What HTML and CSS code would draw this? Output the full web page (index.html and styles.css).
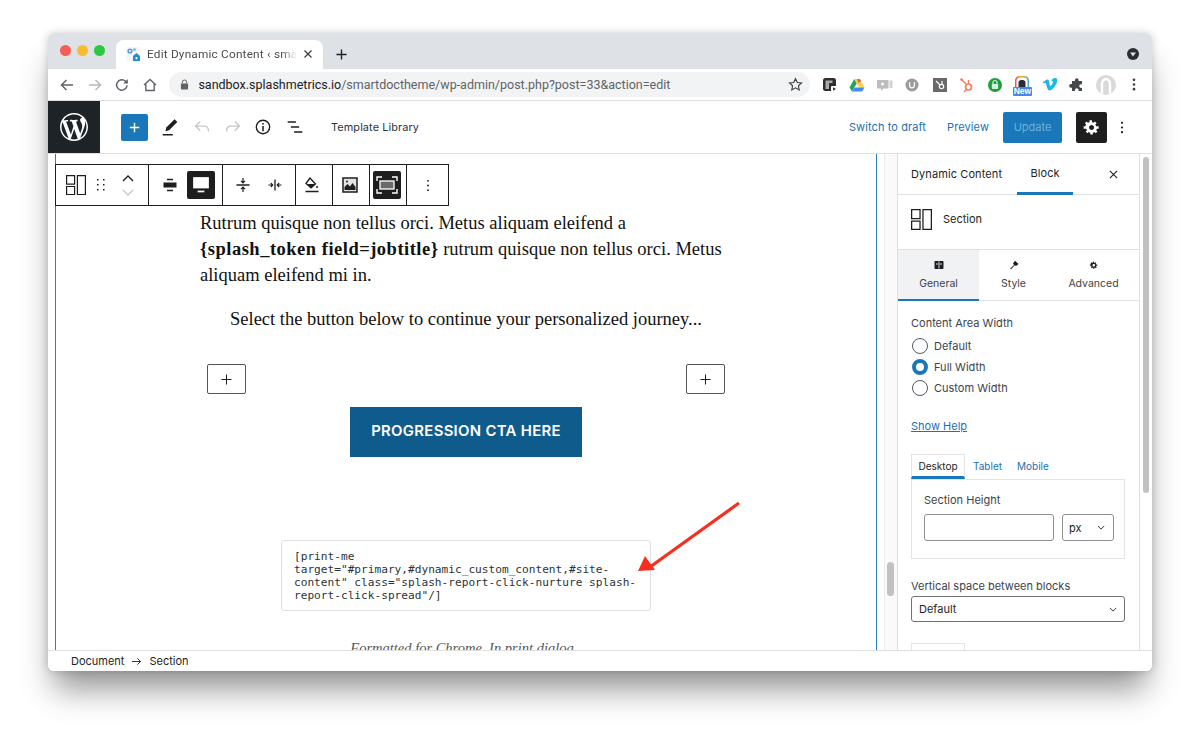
FILE: index.html
```html
<!DOCTYPE html>
<html lang="en">
<head>
<meta charset="utf-8">
<title>Edit Dynamic Content</title>
<link rel="stylesheet" href="styles.css">
</head>
<body>
<div class="window">
  <div class="tabbar">
    <div class="lights"><span class="light red"></span><span class="light amber"></span><span class="light green"></span></div>
    <div class="tab">
      <svg class="favicon" viewBox="0 0 14 14"><rect width="14" height="14" fill="#f4f7fa"/><circle cx="4" cy="4" r="2.6" fill="#5d9ad6"/><circle cx="4" cy="4" r="1" fill="#fff"/><path d="M7 9l3.5-3L14 9v5H7z" fill="#1a8fd8"/><rect x="9.6" y="10" width="1.8" height="2.2" fill="#fff"/><circle cx="8.5" cy="2.5" r="1.5" fill="#8fb8de"/></svg>
      <span class="tab-title">Edit Dynamic Content ‹ smartdoctheme</span>
      <svg class="tab-close" viewBox="0 0 10 10"><path d="M1.5 1.5l7 7M8.5 1.5l-7 7" stroke="#3c4043" stroke-width="1.3" fill="none"/></svg>
    </div>
    <svg class="new-tab" viewBox="0 0 12 12"><path d="M6 .5v11M.5 6h11" stroke="#202124" stroke-width="1.5" fill="none"/></svg>
    <span class="spacer"></span>
    <svg class="profile-menu" viewBox="0 0 12 12"><circle cx="6" cy="6" r="6" fill="#2b2d30"/><path d="M3 4.5h6L6 8.5z" fill="#dee1e6"/></svg>
  </div>

  <div class="navbar">
    <svg class="nav-icon" viewBox="0 0 16 16"><path d="M14 8H2.5M7.5 3L2.5 8l5 5" stroke="#5f6368" stroke-width="1.5" fill="none"/></svg>
    <svg class="nav-icon faded" viewBox="0 0 16 16"><path d="M2 8h11.5M8.5 3l5 5-5 5" stroke="#b5b8bc" stroke-width="1.5" fill="none"/></svg>
    <svg class="nav-icon" viewBox="0 0 16 16"><path d="M13 8.2A5.2 5.2 0 1 1 11.5 4.3L13.3 6" stroke="#5f6368" stroke-width="1.5" fill="none"/><path d="M13.8 2v4.6H9.2z" fill="#5f6368"/></svg>
    <svg class="nav-icon" viewBox="0 0 16 16"><path d="M2 8l6-5.5L14 8M3.8 7v6.5h8.4V7" stroke="#5f6368" stroke-width="1.4" fill="none"/></svg>
    <div class="omnibox">
      <svg class="lock" viewBox="0 0 10 12"><path d="M2.6 5V3.4a2.4 2.4 0 0 1 4.8 0V5" stroke="#5f6368" stroke-width="1.1" fill="none"/><rect x="1" y="5" width="8" height="6.5" rx="1" fill="#5f6368"/></svg>
      <span class="url"><span class="url-host">sandbox.splashmetrics.io</span>/smartdoctheme/wp-admin/post.php?post=33&amp;action=edit</span>
      <svg class="star" viewBox="0 0 16 16"><path d="M8 1.8l1.9 4.1 4.5.5-3.3 3 .9 4.4L8 11.6l-4 2.2.9-4.4-3.3-3 4.5-.5z" stroke="#3c4043" stroke-width="1.2" fill="none"/></svg>
    </div>
    <div class="extensions">
      <svg class="ext" viewBox="0 0 16 16"><rect x="1" y="1" width="13" height="13" rx="2.5" fill="#2e2e2e"/><path d="M3.500 3.500h7v2.500H7v6H3.500z" fill="#aaa"/><rect x="9" y="9" width="7" height="6" rx="1" fill="#fff"/><path d="M11 10.300l3 1.700-3 1.700z" fill="#333"/></svg>
      <svg class="ext" viewBox="0 0 16 16"><path d="M5.200 2L.5 10.500 3 14.500 8 6z" fill="#1fa463"/><path d="M5.200 2h5.600l4.700 8.500H10z" fill="#ffd04b"/><path d="M3 14.500l2.600-4h9.900L13 14.500z" fill="#4688f4"/><path d="M8 2h2.800L12 4.200 9.500 6z" fill="#ea5a45"/></svg>
      <svg class="ext" viewBox="0 0 16 16"><path d="M0 3h11.500v8.500H6.500L4 14v-2.500H0z" fill="#bdbdbd"/><rect x="12.500" y="3.500" width="3" height="7.500" fill="#d2d2d2"/><circle cx="5.500" cy="7" r="1.500" fill="#fff"/></svg>
      <svg class="ext" viewBox="0 0 16 16"><circle cx="8" cy="8" r="6.500" fill="#9b9b9b"/><path d="M5.600 5v3.500a2.400 2.400 0 0 0 4.800 0V5" stroke="#fff" stroke-width="1.300" fill="none"/></svg>
      <svg class="ext" viewBox="0 0 16 16"><rect x="1" y="1" width="14" height="14" fill="#6a6a6a"/><circle cx="9.500" cy="9.500" r="2.200" stroke="#fff" stroke-width="1.200" fill="none"/><path d="M8 8L4 4M10 7V4" stroke="#fff" stroke-width="1.200"/></svg>
      <svg class="ext" viewBox="0 0 16 16"><circle cx="9.500" cy="10" r="3" stroke="#ff7a59" stroke-width="1.700" fill="none"/><path d="M7.500 7.500L2.500 2.500M9.500 7V3M7.500 12.500L5 15" stroke="#ff7a59" stroke-width="1.500"/><circle cx="2.500" cy="2.500" r="1.300" fill="#ff7a59"/></svg>
      <svg class="ext" viewBox="0 0 16 16"><circle cx="8" cy="8" r="7" fill="#1e9e3e"/><rect x="4.800" y="7" width="6.400" height="5" rx=".8" fill="#d8f0dc"/><path d="M6 7V5.500a2 2 0 0 1 4 0V7" stroke="#d8f0dc" stroke-width="1.200" fill="none"/></svg>
      <div class="ext-new">
        <svg class="ext-new-icon" viewBox="0 0 14 11"><defs><linearGradient id="rainbow"><stop offset="0" stop-color="#e8488a"/><stop offset=".5" stop-color="#f4b400"/><stop offset="1" stop-color="#39a7e0"/></linearGradient></defs><path d="M0 11V4.500A4.500 4.500 0 0 1 4.500 0h5A4.500 4.500 0 0 1 14 4.500V11z" fill="url(#rainbow)"/><path d="M1.500 11V5a3.500 3.500 0 0 1 3.500-3.500h4A3.500 3.500 0 0 1 12.500 5v6z" fill="#fff"/><path d="M3.500 11V7a3 3 0 0 1 3-3h1a3 3 0 0 1 3 3v4z" fill="#2b2b33"/></svg>
        <span class="new-badge">New</span>
      </div>
      <svg class="ext" viewBox="0 0 16 16"><path d="M.8 5.500C2.500 4 4 2.500 5.400 2.500c1.600 0 1.700 1.800 2 3.700.3 1.700.6 2.800 1.100 2.800.7 0 2.500-2.900 2.500-4 0-1-.9-1-1.800-.6C9.800 2.200 11.300 1 13 1c1.900 0 2.500 1.300 2.300 3-.4 3-4.700 9.500-7.700 9.500-2 0-2.600-3-3.300-5.700-.3-1.100-.6-2.100-1-2.100-.3 0-1 .4-1.500.8z" fill="#19b7ea"/></svg>
      <svg class="ext" viewBox="0 0 16 16"><path d="M3 4h3V3a1.800 1.800 0 0 1 3.600 0v1h3.400v3.300h-1a1.800 1.800 0 0 0 0 3.600h1V14H9.600v-1a1.800 1.800 0 0 0-3.600 0v1H3v-3.300H2A1.800 1.800 0 0 1 2 7h1z" fill="#45494d"/></svg>
      <svg class="ext-avatar" viewBox="0 0 20 20"><circle cx="10" cy="10" r="10" fill="#d9d9d9"/><path d="M6 18.500V9a4 5 0 0 1 8 0v9.500" stroke="#fff" stroke-width="2.400" fill="none"/></svg>
      <svg class="ext-kebab" viewBox="0 0 4 14"><circle cx="2" cy="2" r="1.400" fill="#3c4043"/><circle cx="2" cy="7" r="1.400" fill="#3c4043"/><circle cx="2" cy="12" r="1.400" fill="#3c4043"/></svg>
    </div>
  </div>

  <div class="wp-header">
    <div class="wp-logo">
      <svg viewBox="0 0 20 20"><path fill="#fff" d="M20 10c0-5.510-4.490-10-10-10C4.480 0 0 4.490 0 10c0 5.520 4.480 10 10 10 5.510 0 10-4.480 10-10zM7.780 15.370L4.370 6.220c.55-.02 1.170-.08 1.170-.08.5-.06.44-1.130-.06-1.110 0 0-1.450.11-2.370.11-.18 0-.37 0-.58-.01C4.120 2.690 6.870 1.110 10 1.110c2.330 0 4.450.87 6.050 2.340-.68-.11-1.650.39-1.650 1.580 0 .74.45 1.360.9 2.100.35.61.55 1.360.55 2.460 0 1.490-1.400 5-1.400 5l-3.030-8.370c.54-.02.82-.17.82-.17.5-.05.44-1.250-.06-1.220 0 0-1.440.12-2.380.12-.87 0-2.330-.12-2.330-.12-.5-.03-.56 1.200-.06 1.220l.92.08 1.260 3.410zM17.410 10c.24-.64.74-1.870.43-4.250.7 1.290 1.050 2.710 1.050 4.250 0 3.290-1.730 6.240-4.400 7.780.97-2.590 1.940-5.200 2.920-7.780zM6.100 18.090C3.120 16.650 1.110 13.530 1.110 10c0-1.300.23-2.480.72-3.590C3.250 10.300 4.670 14.200 6.100 18.090zm4.030-6.630l2.580 6.980c-.86.29-1.760.45-2.710.45-.79 0-1.570-.11-2.290-.33.81-2.380 1.620-4.740 2.420-7.100z"/></svg>
    </div>
    <div class="add-btn"><svg viewBox="0 0 14 14"><path d="M7 1v12M1 7h12" stroke="#fff" stroke-width="1.800" fill="none"/></svg></div>
    <svg class="hd-icon pencil" viewBox="0 0 24 24"><path d="M7 16.500l1-4L17 3.500l3 3-9 9z" fill="#1e1e1e"/><path d="M4 20.500h11" stroke="#1e1e1e" stroke-width="1.700"/></svg>
    <svg class="hd-icon undo" viewBox="0 0 24 24"><path d="M19 17v-1.500a4.500 4.500 0 0 0-4.500-4.500H5M10 6L5 11l5 5" stroke="#c4c7ca" stroke-width="1.500" fill="none"/></svg>
    <svg class="hd-icon redo" viewBox="0 0 24 24"><path d="M5 17v-1.500A4.500 4.500 0 0 1 9.500 11H19M14 6l5 5-5 5" stroke="#c4c7ca" stroke-width="1.500" fill="none"/></svg>
    <svg class="hd-icon info" viewBox="0 0 24 24"><circle cx="12" cy="12" r="7.300" stroke="#1e1e1e" stroke-width="1.500" fill="none"/><path d="M12 11v5.500" stroke="#1e1e1e" stroke-width="1.700"/><circle cx="12" cy="8.500" r="1" fill="#1e1e1e"/></svg>
    <svg class="hd-icon listview" viewBox="0 0 24 24"><path d="M4 6.500h9M7.500 12h9M11 17.500h9" stroke="#1e1e1e" stroke-width="1.600" fill="none"/></svg>
    <span class="template-link">Template Library</span>
    <span class="spacer"></span>
    <span class="hd-link draft">Switch to draft</span>
    <span class="hd-link preview">Preview</span>
    <div class="update-btn">Update</div>
    <div class="gear-btn"><svg viewBox="-2 -2 24 24"><path fill="#fff" d="M18 12h-2.180c-.17.7-.44 1.350-.81 1.930l1.540 1.540-2.100 2.100-1.540-1.540c-.58.36-1.230.63-1.910.79V19H8v-2.180c-.68-.16-1.330-.43-1.910-.79l-1.540 1.540-2.120-2.120 1.540-1.540c-.36-.58-.63-1.230-.79-1.910H0V9.030h2.170c.16-.7.44-1.350.8-1.940L1.430 5.550l2.100-2.100 1.540 1.540c.58-.37 1.240-.64 1.930-.81V2h3v2.180c.68.16 1.330.43 1.910.79l1.540-1.540 2.120 2.120-1.540 1.540c.36.59.64 1.240.8 1.940H18V12zm-8.500 1.500c1.660 0 3-1.340 3-3s-1.340-3-3-3-3 1.340-3 3 1.340 3 3 3z"/></svg></div>
    <svg class="hd-kebab" viewBox="0 0 4 14"><circle cx="2" cy="2" r="1.200" fill="#1e1e1e"/><circle cx="2" cy="7" r="1.200" fill="#1e1e1e"/><circle cx="2" cy="12" r="1.200" fill="#1e1e1e"/></svg>
  </div>

  <div class="workspace">
    <div class="canvas">
      <div class="block-toolbar">
        <div class="tb-group g-section">
          <svg class="tb-section" viewBox="0 0 20 20"><path d="M.6.600h8v8.500h-8zM.6 11.500h8v8h-8zM11.400.600h8v18.900h-8z" stroke="#1e1e1e" stroke-width="1.200" fill="none"/></svg>
          <svg class="tb-drag" viewBox="0 0 8 12"><g fill="#1e1e1e"><rect width="1.500" height="1.500"/><rect x="6" width="1.500" height="1.500"/><rect y="5" width="1.500" height="1.500"/><rect x="6" y="5" width="1.500" height="1.500"/><rect y="10" width="1.500" height="1.500"/><rect x="6" y="10" width="1.500" height="1.500"/></g></svg>
          <div class="tb-movers">
            <svg viewBox="0 0 12 7"><path d="M1 6l5-5 5 5" stroke="#1e1e1e" stroke-width="1.400" fill="none"/></svg>
            <svg viewBox="0 0 12 7"><path d="M1 1l5 5 5-5" stroke="#c8c8c8" stroke-width="1.400" fill="none"/></svg>
          </div>
        </div>
        <div class="tb-group g-align">
          <svg class="tb-icon" viewBox="0 0 16 16"><path d="M5 2.500h6M5 13.500h6" stroke="#1e1e1e" stroke-width="1.400"/><rect x="1.500" y="5.500" width="13" height="5" fill="#1e1e1e"/></svg>
          <div class="tb-active"><svg class="tb-icon-lg" viewBox="0 0 16 16"><rect x="1" y="1" width="14" height="10" fill="#fff"/><rect x="5" y="13" width="6" height="1.500" fill="#fff"/></svg></div>
        </div>
        <div class="tb-group g-space">
          <svg class="tb-icon" viewBox="0 0 16 16"><path d="M1.500 8h13" stroke="#1e1e1e" stroke-width="1.300"/><path d="M8 1v4.500M8 10.500V15M6 3.800l2 2 2-2M6 12.200l2-2 2 2" stroke="#1e1e1e" stroke-width="1.200" fill="none"/></svg>
          <svg class="tb-icon" viewBox="0 0 16 16"><path d="M8 2.500v11" stroke="#1e1e1e" stroke-width="1.300"/><path d="M1.500 8h4.500M10 8h4.500M3.800 6l2 2-2 2M12.200 6l-2 2 2 2" stroke="#1e1e1e" stroke-width="1.100" fill="none"/></svg>
        </div>
        <div class="tb-group g-narrow">
          <svg class="tb-icon-xl paint" viewBox="0 0 16 16"><path d="M6 1L2 6.500 7 11l4.500-4z" stroke="#1e1e1e" stroke-width="1.300" fill="none"/><path d="M3 7h8l-4 4z" fill="#1e1e1e"/><circle cx="13" cy="10" r="1" fill="#1e1e1e"/><path d="M1.500 14.500h13" stroke="#1e1e1e" stroke-width="1.500"/></svg>
        </div>
        <div class="tb-group g-narrow">
          <svg class="tb-icon-xl media" viewBox="0 0 16 16"><rect x="1" y="1" width="14" height="14" fill="#e4e4e4" stroke="#1e1e1e" stroke-width="1.500"/><path d="M2.500 13V10l3-3 2.500 2.500L10.500 6l3 4v3z" fill="#1e1e1e"/><circle cx="5" cy="4.500" r="1" fill="#1e1e1e"/></svg>
        </div>
        <div class="tb-group g-narrow">
          <div class="tb-active wide"><svg class="tb-icon-full" viewBox="0 0 22 18"><path d="M1 5V1h5M16 1h5v4M21 13v4h-5M6 17H1v-4" stroke="#fff" stroke-width="1.400" fill="none"/><rect x="4" y="5" width="14" height="8" stroke="#fff" stroke-width="1.300" fill="#6a6a6a"/></svg></div>
        </div>
        <div class="tb-group g-last">
          <svg class="tb-kebab" viewBox="0 0 4 14"><circle cx="2" cy="2" r="1" fill="#1e1e1e"/><circle cx="2" cy="7" r="1" fill="#1e1e1e"/><circle cx="2" cy="12" r="1" fill="#1e1e1e"/></svg>
        </div>
      </div>

      <div class="canvas-inner">
        <div class="doc">
          <p class="para">Rutrum quisque non tellus orci. Metus aliquam eleifend a<br><strong class="token">{splash_token field=jobtitle}</strong> rutrum quisque non tellus orci. Metus<br>aliquam eleifend mi in.</p>
          <p class="para center">Select the button below to continue your personalized journey...</p>
          <div class="inserters">
            <div class="inserter"><svg viewBox="0 0 12 12"><path d="M6 .5v11M.5 6h11" stroke="#1e1e1e" stroke-width="1.100" fill="none"/></svg></div>
            <div class="inserter"><svg viewBox="0 0 12 12"><path d="M6 .5v11M.5 6h11" stroke="#1e1e1e" stroke-width="1.100" fill="none"/></svg></div>
          </div>
          <div class="cta">PROGRESSION CTA HERE</div>
          <div class="shortcode">[print-me<br>target="#primary,#dynamic_custom_content,#site-<br>content" class="splash-report-click-nurture splash-<br>report-click-spread"/]</div>
          <p class="note">Formatted for Chrome. In print dialog</p>
        </div>
      </div>

      <svg class="arrow" viewBox="0 0 120 90"><path d="M103 2L14 66" stroke="#f5301f" stroke-width="3.200" fill="none"/><path d="M2 70L9 55 19 69z" fill="#f5301f"/></svg>
    </div>

    <div class="canvas-track"><div class="canvas-thumb"></div></div>

    <aside class="sidebar">
      <div class="side-tabs">
        <span class="side-tab doc-tab">Dynamic Content</span>
        <span class="side-tab block-tab">Block</span>
        <span class="spacer"></span>
        <svg class="side-close" viewBox="0 0 10 10"><path d="M1 1l8 8M9 1l-8 8" stroke="#1e1e1e" stroke-width="1.200" fill="none"/></svg>
      </div>
      <div class="block-card">
        <svg class="card-icon" viewBox="0 0 20 20"><path d="M.6.600h8v8.500h-8zM.6 11.500h8v8h-8zM11.400.600h8v18.900h-8z" stroke="#1e1e1e" stroke-width="1.200" fill="none"/></svg>
        <span class="card-title">Section</span>
      </div>
      <div class="panel-tabs">
        <div class="panel-tab active">
          <svg viewBox="0 0 10 10"><rect x=".5" y="1" width="9" height="8" rx=".8" fill="#1e1e1e"/><path d="M5 1.500v7M2 4h2M6 4h2" stroke="#f1f2f4" stroke-width=".9"/></svg>
          <span>General</span>
        </div>
        <div class="panel-tab style">
          <svg viewBox="0 0 10 10"><path d="M1 8.800L5 5 4 3.500 6 .8 9.500 4 7 6 5.800 5.200 2 9.300z" fill="#1e1e1e"/></svg>
          <span>Style</span>
        </div>
        <div class="panel-tab advanced">
          <svg viewBox="-2 -2 24 24"><path fill="#1e1e1e" d="M18 12h-2.180c-.17.7-.44 1.350-.81 1.930l1.540 1.540-2.100 2.100-1.540-1.540c-.58.36-1.230.63-1.910.79V19H8v-2.180c-.68-.16-1.330-.43-1.910-.79l-1.540 1.540-2.120-2.120 1.540-1.540c-.36-.58-.63-1.230-.79-1.910H0V9.030h2.170c.16-.7.44-1.350.8-1.940L1.430 5.550l2.100-2.100 1.540 1.540c.58-.37 1.240-.64 1.930-.81V2h3v2.180c.68.16 1.330.43 1.910.79l1.540-1.540 2.120 2.120-1.540 1.540c.36.59.64 1.240.8 1.940H18V12zm-8.500 1.500c1.660 0 3-1.340 3-3s-1.340-3-3-3-3 1.340-3 3 1.340 3 3 3z"/></svg>
          <span>Advanced</span>
        </div>
      </div>
      <div class="side-body">
        <div class="field-label">Content Area Width</div>
        <div class="radios">
          <div class="radio-row"><span class="radio"></span><span>Default</span></div>
          <div class="radio-row"><span class="radio checked"></span><span>Full Width</span></div>
          <div class="radio-row"><span class="radio"></span><span>Custom Width</span></div>
        </div>
        <div class="show-help">Show Help</div>
        <div class="device-tabs">
          <span class="device-tab current">Desktop</span>
          <span class="device-tab tablet">Tablet</span>
          <span class="device-tab mobile">Mobile</span>
        </div>
        <div class="device-panel">
          <div class="height-label">Section Height</div>
          <div class="height-row">
            <div class="input"></div>
            <div class="unit"><span>px</span><svg viewBox="0 0 10 6"><path d="M1 1l4 4 4-4" stroke="#1e1e1e" stroke-width="1.100" fill="none"/></svg></div>
          </div>
        </div>
        <div class="space-label">Vertical space between blocks</div>
        <div class="select"><span>Default</span><svg viewBox="0 0 10 6"><path d="M1 1l4 4 4-4" stroke="#1e1e1e" stroke-width="1.100" fill="none"/></svg></div>
        <div class="next-tab"></div>
      </div>
    </aside>

    <div class="page-track"><div class="page-thumb"></div></div>
  </div>

  <div class="statusbar">
    <span>Document</span>
    <svg viewBox="0 0 12 10"><path d="M1 5h9.500M7 1.500L10.500 5 7 8.500" stroke="#1e1e1e" stroke-width="1" fill="none"/></svg>
    <span>Section</span>
  </div>
</div>
</body>
</html>
```
FILE: styles.css
```css
* { box-sizing: border-box; }
html, body { margin: 0; padding: 0; }
body {
  width: 1200px;
  height: 735px;
  padding: 33px 48px 0;
  background: #fff;
  overflow: hidden;
  font-family: Inter, "Liberation Sans", sans-serif;
  color: #1e1e1e;
}
svg { display: block; flex: none; }
.spacer { flex: 1; }

.window {
  width: 1104px;
  height: 638px;
  display: flex;
  flex-direction: column;
  background: #fff;
  border-radius: 6px;
  box-shadow: 0 24px 30px -6px rgba(0,0,0,.42), 0 0 8px rgba(0,0,0,.18);
  overflow: hidden;
}

/* Tab strip */
.tabbar {
  height: 36px;
  flex: none;
  display: flex;
  align-items: flex-end;
  background: #dee1e6;
}
.lights { display: flex; gap: 6px; align-self: center; margin: 0 0 0 12px; padding-bottom: 1px; }
.light { width: 11px; height: 11px; border-radius: 50%; }
.red { background: #f45c55; }
.amber { background: #f9bc2f; }
.green { background: #2dc841; }
.tab {
  width: 207px;
  height: 29px;
  margin-left: 11px;
  padding: 0 9px 1px 10px;
  display: flex;
  align-items: center;
  background: #fff;
  border-radius: 8px 8px 0 0;
}
.favicon { width: 14px; height: 14px; }
.tab-title {
  width: 150px;
  margin-left: 7px;
  white-space: nowrap;
  overflow: hidden;
  font: 11.800px Roboto, sans-serif;
  letter-spacing: .2px;
  color: #4a4d51;
  -webkit-mask-image: linear-gradient(90deg, #000 90%, transparent);
  mask-image: linear-gradient(90deg, #000 90%, transparent);
}
.tab-close { width: 10px; height: 10px; margin-left: 6px; }
.new-tab { width: 11px; height: 11px; margin: 0 0 9px 13px; }
.profile-menu { width: 12px; height: 12px; margin: 0 13px 9px 0; }

/* Address bar */
.navbar {
  height: 32px;
  flex: none;
  display: flex;
  align-items: center;
  background: #fff;
  border-bottom: 1px solid #dcdde0;
  padding-left: 11px;
}
.nav-icon { width: 16px; height: 16px; margin-right: 11.800px; }
.nav-icon.faded { margin-right: 11px; }
.omnibox {
  width: 641px;
  height: 25px;
  padding: 0 7px 0 11px;
  display: flex;
  align-items: center;
  background: #f1f3f4;
  border-radius: 13px;
}
.lock { width: 9px; height: 11px; }
.url {
  margin-left: 9px;
  flex: 1;
  font: 12.500px Roboto, sans-serif;
  color: #5f6368;
  white-space: nowrap;
}
.url-host { color: #202124; }
.star { width: 15px; height: 15px; }
.extensions {
  display: flex;
  align-items: center;
  margin-left: 11.500px;
  gap: 11.500px;
}
.ext { width: 16px; height: 16px; }
.ext-new { width: 22px; height: 22px; margin: 0 -3px; display: flex; flex-direction: column; align-items: center; }
.ext-new-icon { width: 16px; height: 11px; margin-top: 2px; }
.new-badge {
  width: 19px;
  font: 700 8.500px/9px "Liberation Sans", sans-serif;
  text-align: center;
  color: #fff;
  background: #4a86e8;
  border-radius: 1px;
}
.ext-avatar { width: 20px; height: 20px; margin: 0 -2px 0 -1px; }
.ext-kebab { width: 4px; height: 13px; margin-left: 7px; }

/* Editor header */
.wp-header {
  height: 53px;
  flex: none;
  display: flex;
  align-items: center;
  background: #fff;
  border-bottom: 1px solid #e0e0e0;
}
.wp-logo {
  width: 52px;
  height: 52px;
  display: flex;
  align-items: center;
  justify-content: center;
  background: #1e2327;
}
.wp-logo svg { width: 28px; height: 28px; }
.add-btn {
  width: 27px;
  height: 27px;
  margin-left: 21px;
  display: flex;
  align-items: center;
  justify-content: center;
  background: #1a78ba;
  border-radius: 2px;
}
.add-btn svg { width: 11px; height: 11px; }
.hd-icon { width: 22px; height: 22px; }
.pencil { margin-left: 11px; }
.undo { margin-left: 10px; }
.redo { margin-left: 9px; }
.info { margin-left: 8px; }
.listview { margin-left: 10px; }
.template-link { margin-left: 25px; font-size: 10.900px; letter-spacing: .1px; color: #2c3338; }
.hd-link { font-size: 11px; letter-spacing: .1px; color: #2271b1; }
.preview { margin-left: 21px; }
.update-btn {
  width: 59px;
  height: 31px;
  margin-left: 14px;
  display: flex;
  align-items: center;
  justify-content: center;
  background: #1a78ba;
  border-radius: 2px;
  font-size: 11px;
  color: #6fafdb;
}
.gear-btn {
  width: 31px;
  height: 31px;
  margin-left: 14px;
  display: flex;
  align-items: center;
  justify-content: center;
  background: #1e1e1e;
  border-radius: 2px;
}
.gear-btn svg { width: 20px; height: 20px; }
.hd-kebab { width: 4px; height: 13px; margin: 0 28px 0 13px; }

/* Workspace */
.workspace { flex: 1; min-height: 0; display: flex; }
.canvas {
  width: 836px;
  position: relative;
  padding: 0 7px;
  overflow: hidden;
  background: #fff;
}
.canvas-inner {
  height: 100%;
  border-left: 1.500px solid #2b7fc0;
  border-right: 1.500px solid #2b7fc0;
  padding-top: 56px;
  overflow: hidden;
}
.block-toolbar {
  position: absolute;
  left: 7px;
  top: 10px;
  width: 394px;
  height: 42px;
  display: flex;
  background: #fff;
  border: 1px solid #1e1e1e;
  z-index: 2;
}
.tb-group {
  display: flex;
  align-items: center;
  border-right: 1px solid #1e1e1e;
}
.g-section { width: 93px; padding-left: 10px; }
.tb-section { width: 20px; height: 20px; }
.tb-drag { width: 8px; height: 12px; margin-left: 11px; }
.tb-movers { margin-left: 17px; display: flex; flex-direction: column; gap: 7px; }
.tb-movers svg { width: 12px; height: 7px; }
.g-align { width: 74px; padding-left: 13px; }
.tb-icon { width: 16px; height: 16px; }
.tb-active {
  width: 28px;
  height: 28px;
  margin-left: 9px;
  display: flex;
  align-items: center;
  justify-content: center;
  background: #1e1e1e;
  border-radius: 2px;
}
.tb-icon-lg { width: 18px; height: 18px; }
.g-space { width: 73px; padding-left: 12px; gap: 16px; }
.g-narrow { width: 37px; justify-content: center; }
.tb-icon-xl { width: 16px; height: 16px; }
.paint { margin-right: 5px; }
.media { margin-right: 3px; }
.tb-active.wide { margin: 0 3px 0 0; }
.tb-icon-full { width: 22px; height: 18px; }
.g-last { flex: 1; justify-content: center; border-right: 0; }
.tb-kebab { width: 4px; height: 13px; }

.doc { width: 532px; margin: 0 auto; }
.para {
  margin: 0 0 18px;
  font: 18.500px/26px "Liberation Serif", serif;
  color: #111;
  white-space: nowrap;
}
.token { font-weight: 700; letter-spacing: .5px; }
.center { text-align: center; margin-bottom: 32px; }
.inserters { display: flex; justify-content: space-between; padding: 0 7px; }
.inserter {
  width: 39px;
  height: 30px;
  display: flex;
  align-items: center;
  justify-content: center;
  border: 1px solid #555;
  border-radius: 2px;
}
.inserter svg { width: 11px; height: 11px; }
.cta {
  width: 232px;
  height: 50px;
  margin: 13px auto 83px;
  padding-bottom: 3px;
  display: flex;
  align-items: center;
  justify-content: center;
  background: #0f5c8c;
  font: 600 14.900px Inter, sans-serif;
  letter-spacing: .3px;
  color: #fff;
}
.shortcode {
  width: 370px;
  height: 71px;
  margin: 0 auto;
  padding: 10px 12px;
  border: 1px solid #e0e0e0;
  border-radius: 3px;
  font: 11.150px/12.900px "DejaVu Sans Mono", monospace;
  color: #2c3338;
  white-space: nowrap;
}
.note {
  margin: 25px 0 0;
  padding-right: 8px;
  text-align: center;
  font: italic 14.500px/24px "Liberation Serif", serif;
  color: #555;
}
.arrow {
  position: absolute;
  left: 588px;
  top: 347px;
  width: 120px;
  height: 90px;
  pointer-events: none;
}

.canvas-track {
  width: 13px;
  border-left: 1px solid #ececec;
  background: #fafafa;
  padding-left: 2px;
}
.canvas-thumb { width: 7px; height: 34px; margin-top: 408px; background: #c1c1c1; border-radius: 4px; }

/* Sidebar */
.sidebar {
  width: 243px;
  border-left: 1px solid #e0e0e0;
  border-right: 1px solid #e0e0e0;
  background: #fff;
  overflow: hidden;
  font-size: 11px;
  color: #3c434a;
}
.side-tabs {
  height: 41px;
  display: flex;
  align-items: center;
  padding: 0 21px 0 13px;
  border-bottom: 1px solid #e0e0e0;
  color: #1e1e1e;
}
.side-tab { font-size: 11px; letter-spacing: .1px; }
.block-tab {
  align-self: stretch;
  width: 56px;
  margin-left: 15px;
  display: flex;
  align-items: center;
  justify-content: center;
  border-bottom: 3px solid #1a78ba;
  margin-bottom: -1px;
}
.side-close { width: 9px; height: 9px; }
.block-card { height: 55px; display: flex; align-items: center; padding: 0 0 6px 13px; gap: 11px; border-bottom: 1px solid #e0e0e0; }
.card-icon { width: 21px; height: 21px; }
.card-title { font-size: 11px; color: #1e1e1e; }
.panel-tabs { height: 51px; display: flex; border-bottom: 1px solid #e0e0e0; }
.panel-tab {
  display: flex;
  flex-direction: column;
  align-items: center;
  padding-top: 10px;
  gap: 7px;
  font-size: 10.500px;
}
.panel-tab svg { width: 10px; height: 10px; }
.panel-tab.active { width: 81px; background: #f1f2f4; border-bottom: 2px solid #1a78ba; margin-bottom: -1px; }
.panel-tab.style { width: 69px; }
.panel-tab.advanced { width: 91px; }
.side-body { padding: 15px 14px 0 13px; }
.field-label { font-size: 11px; line-height: 14px; }
.radios { margin-top: 7px; display: flex; flex-direction: column; gap: 4.200px; }
.radio-row { display: flex; align-items: center; gap: 6px; height: 17px; padding-left: 1px; }
.radio { width: 16px; height: 16px; border: 1px solid #50575e; border-radius: 50%; background: #fff; flex: none; }
.radio.checked { border: 4.500px solid #1a78ba; }
.show-help { margin-top: 23px; font-size: 11px; line-height: 14px; color: #2271b1; text-decoration: underline; }
.device-tabs { margin-top: 21px; display: flex; height: 25px; align-items: center; font-size: 10px; line-height: 22px; }
.device-tab { color: #2271b1; padding-bottom: 2px; }
.device-tab.current {
  width: 54px;
  height: 25px;
  padding-bottom: 0;
  display: flex;
  align-items: center;
  justify-content: center;
  border: 1px solid #e4e4e4;
  border-bottom: 3px solid #1a78ba;
  color: #1e1e1e;
}
.tablet { margin-left: 8px; }
.mobile { margin-left: 15px; }
.device-panel { height: 80px; padding: 13px 10px 0 12px; border: 1px solid #e4e4e4; }
.height-label { font-size: 11px; line-height: 14px; }
.height-row { margin-top: 7px; display: flex; gap: 8px; }
.input { width: 130px; height: 27px; background: #fff; border: 1px solid #8c8f94; border-radius: 3px; }
.unit {
  width: 52px;
  height: 27px;
  padding: 0 8px 0 6px;
  display: flex;
  align-items: center;
  justify-content: space-between;
  border: 1px solid #8c8f94;
  border-radius: 3px;
  color: #1e1e1e;
}
.unit svg, .select svg { width: 8px; height: 5px; }
.space-label { margin-top: 20px; font-size: 11px; line-height: 14px; }
.select {
  height: 26px;
  margin-top: 3px;
  padding: 0 7px;
  display: flex;
  align-items: center;
  justify-content: space-between;
  border: 1px solid #6f7479;
  border-radius: 3px;
  color: #1e1e1e;
}
.next-tab { width: 54px; height: 20px; margin-top: 21px; border: 1px solid #e4e4e4; }

.page-track { flex: 1; background: #fff; padding: 3px 0 0 3px; }
.page-thumb { width: 6px; height: 336px; background: #c1c1c1; border-radius: 4px; }

/* Status bar */
.statusbar {
  height: 21px;
  flex: none;
  display: flex;
  align-items: center;
  gap: 7px;
  padding-left: 23px;
  background: #fff;
  border-top: 1px solid #e0e0e0;
  font-size: 11px;
  position: relative;
  z-index: 3;
}
.statusbar svg { width: 11px; height: 9px; }
```
